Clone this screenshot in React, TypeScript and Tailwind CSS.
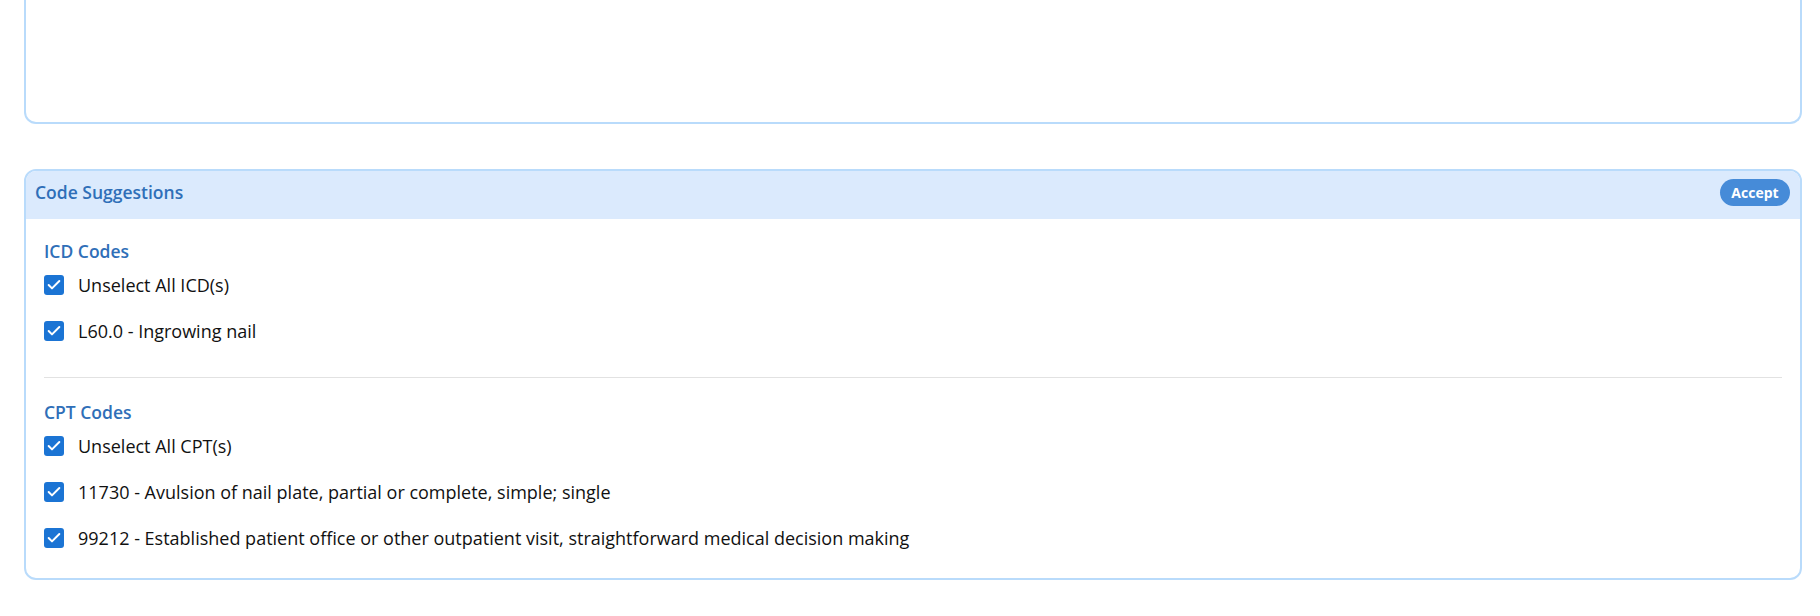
import { Check } from "lucide-react";

const icdCodes = ["L60.0 - Ingrowing nail"];
const cptCodes = [
  "11730 - Avulsion of nail plate, partial or complete, simple; single",
  "99212 - Established patient office or other outpatient visit, straightforward medical decision making",
];

function CheckRow({ label }: { label: string }) {
  return (
    <label className="flex h-6 items-center gap-[14px]">
      <span className="flex h-5 w-5 shrink-0 items-center justify-center rounded-[3px] bg-[#1b74d4]">
        <Check className="h-4 w-4 text-white" strokeWidth={3} />
      </span>
      <span className="text-[18px] leading-6 text-[#111111]">{label}</span>
    </label>
  );
}

function CodeGroup({ title, allLabel, codes }: { title: string; allLabel: string; codes: string[] }) {
  return (
    <div>
      <h3 className="mb-[10px] text-[17.5px] font-semibold leading-6 text-[#2f6fb8]">{title}</h3>
      <div className="flex flex-col gap-[22px]">
        <CheckRow label={allLabel} />
        {codes.map((c) => (
          <CheckRow key={c} label={c} />
        ))}
      </div>
    </div>
  );
}

export default function App() {
  return (
    <div className="min-h-[616px] bg-white pl-[24px] pr-[18px]" style={{ fontFamily: '"Open Sans", "Noto Sans", sans-serif' }}>
      {/* notes card, only its bottom shows */}
      <div className="h-[124px] rounded-b-[12px] border-2 border-t-0 border-[#b9dbfb]" />

      <div className="mt-[45px] overflow-hidden rounded-[12px] border-2 border-[#b9dbfb]">
        <div className="flex items-center justify-between bg-[#dbeafd] pb-[13px] pl-[9px] pr-[10px] pt-[8px]">
          <h2 className="text-[17.5px] font-semibold leading-[27px] text-[#2f6fb8]">Code Suggestions</h2>
          <button
            type="button"
            className="flex h-[27px] w-[70px] items-center justify-center rounded-full bg-[#468bd8] text-[14px] font-bold text-white"
          >
            Accept
          </button>
        </div>

        <div className="px-[18px] pb-[28px] pt-[20px]">
          <CodeGroup title="ICD Codes" allLabel="Unselect All ICD(s)" codes={icdCodes} />
          <div className="mb-[22px] mt-[34px] h-px bg-[#e2e2e2]" />
          <CodeGroup title="CPT Codes" allLabel="Unselect All CPT(s)" codes={cptCodes} />
        </div>
      </div>
    </div>
  );
}
